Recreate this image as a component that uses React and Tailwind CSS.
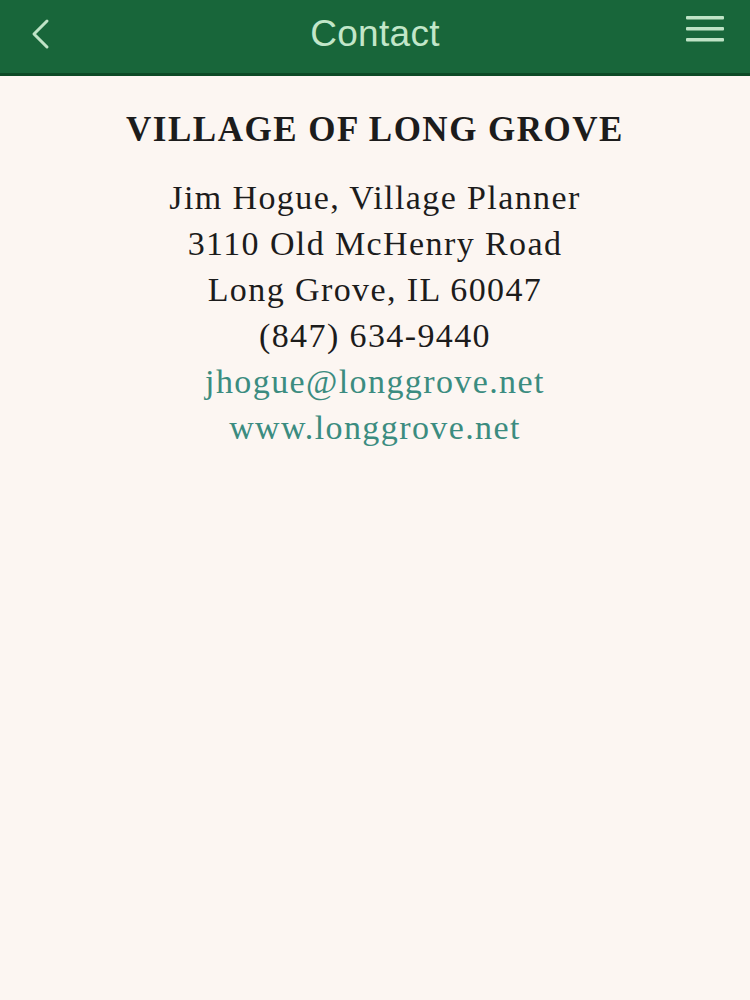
import React from "react";

const lines = [
  "Jim Hogue, Village Planner",
  "3110 Old McHenry Road",
  "Long Grove, IL 60047",
  "(847) 634-9440",
];

export default function App() {
  return (
    <div className="min-h-[1000px] w-[750px] bg-[#fcf6f2]">
      <header className="flex h-[76px] items-center justify-between border-b-[3px] border-[#0d4a26] bg-[#18663a] px-[28px] pb-[6px]">
        <div className="flex w-[40px] items-center">
          <svg width="24" height="34" viewBox="0 0 24 34" fill="none">
            <path d="M19 4 L6 17 L19 30" stroke="#bfe3c6" strokeWidth="3" strokeLinecap="round" strokeLinejoin="round" />
          </svg>
        </div>
        <h1 className="font-['Liberation_Sans',Arial,sans-serif] text-[37px] leading-none tracking-[0.3px] text-[#c2e6c9]">Contact</h1>
        <div className="flex w-[40px] justify-end">
          <svg width="40" height="30" viewBox="0 0 40 30" className="-mr-[3px] -mt-[10px]">
            <rect x="1" y="2" width="38" height="3.5" rx="1" fill="#bfe3c6" />
            <rect x="1" y="13" width="38" height="3.5" rx="1" fill="#bfe3c6" />
            <rect x="1" y="24" width="38" height="3.5" rx="1" fill="#bfe3c6" />
          </svg>
        </div>
      </header>
      <main className="flex flex-col items-center pt-[34px] font-['Liberation_Serif','Times_New_Roman',serif] text-[#1c1c1c]">
        <h2 className="text-[35px] font-bold leading-[40px] tracking-[1.5px]">VILLAGE OF LONG GROVE</h2>
        <div className="mt-[25px] flex flex-col items-center text-[34px] leading-[46px] tracking-[1.4px]">
          {lines.map((l) => (
            <p key={l}>{l}</p>
          ))}
          <a className="text-[#3b8c80]">jhogue@longgrove.net</a>
          <a className="text-[#3b8c80]">www.longgrove.net</a>
        </div>
      </main>
    </div>
  );
}
